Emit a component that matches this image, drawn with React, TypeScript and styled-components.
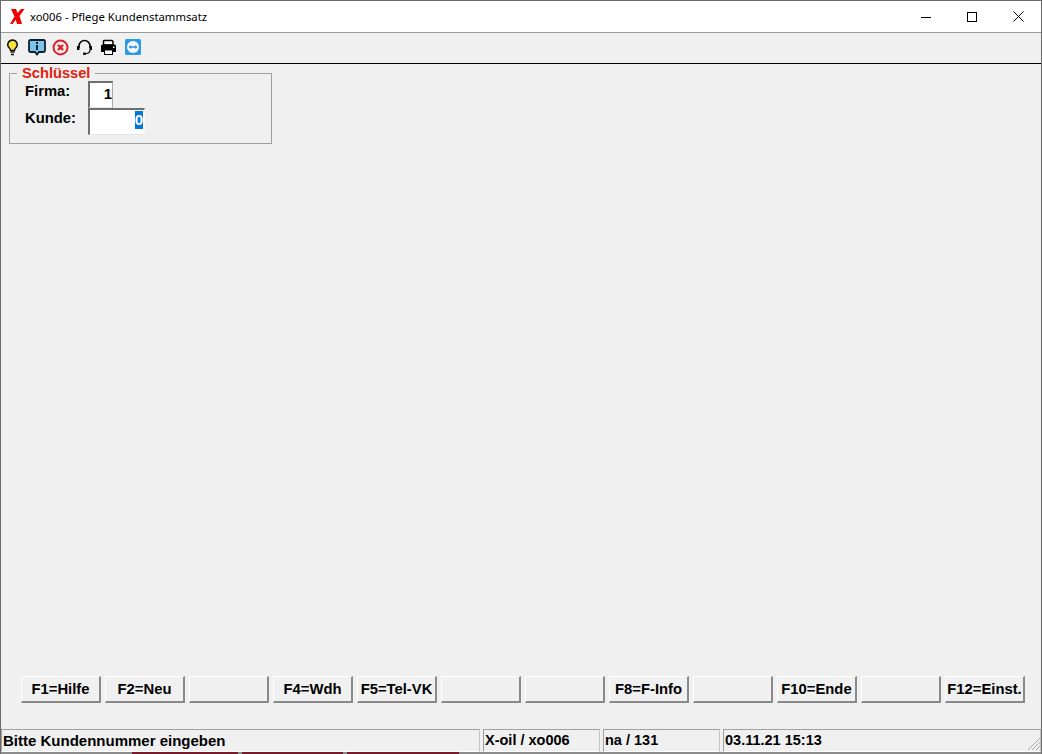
import React from "react";
import styled, { createGlobalStyle } from "styled-components";

const Global = createGlobalStyle`
  html, body { margin: 0; padding: 0; background: #f0f0f0; }
  #root { width: 1042px; height: 754px; overflow: hidden; }
`;

const Win = styled.div`
  width: 1042px;
  height: 754px;
  box-sizing: border-box;
  display: flex;
  flex-direction: column;
  background: #f0f0f0;
  border-top: 1px solid #6b6b6b;
  border-left: 1px solid #6b6b6b;
  border-right: 1px solid #6b6b6b;
  font-family: "Liberation Sans", Arial, sans-serif;
  color: #000;
`;

const TitleBar = styled.div`
  height: 31px;
  flex: none;
  background: #fff;
  border-bottom: 1px solid #9a9a9a;
  display: flex;
  align-items: center;
  padding-left: 9px;
`;

const TitleText = styled.span`
  font-family: "Noto Sans", "Open Sans", sans-serif;
  font-size: 11.3px;
  margin-left: 5px;
  color: #000;
`;

const WinButtons = styled.div`
  margin-left: auto;
  display: flex;
  height: 100%;
`;

const WinButton = styled.div`
  width: 46px;
  height: 31px;
  display: flex;
  align-items: center;
  justify-content: center;
`;

const ToolBar = styled.div`
  height: 28px;
  padding-bottom: 2px;
  flex: none;
  border-bottom: 1px solid #000;
  display: flex;
  align-items: center;
  gap: 3px;
  padding-left: 1px;
  background: #f0f0f0;
`;

const Tool = styled.div`
  width: 21px;
  height: 20px;
  display: flex;
  align-items: center;
  justify-content: center;
`;

const Content = styled.div`
  flex: 1;
  min-height: 0;
  display: flex;
  flex-direction: column;
  padding: 2px 0 0 8px;
`;

const Group = styled.fieldset`
  margin: 0;
  width: 263px;
  height: 78px;
  box-sizing: border-box;
  border: 1px solid #a0a0a0;
  padding: 0 0 0 15px;
`;

const Legend = styled.legend`
  padding: 0 5px;
  margin-left: -8px;
  color: #e1210f;
  font-size: 14.67px;
  font-weight: bold;
  line-height: 15px;
`;

const FieldRow = styled.div`
  display: flex;
  align-items: flex-start;
  height: 27px;
`;

const Label = styled.label`
  width: 63px;
  font-size: 14.8px;
  font-weight: bold;
  line-height: 20px;
  flex: none;
`;

const Input = styled.div<{ $w: number; $pad: number; $edge: string }>`
  width: ${(p) => p.$w}px;
  height: 27px;
  box-sizing: border-box;
  background: #fff;
  border-top: 2px solid #6e6e6e;
  border-left: 2px solid #6e6e6e;
  border-right: 1px solid ${(p) => p.$edge};
  border-bottom: 1px solid #e4e4e4;
  font-size: 15px;
  font-weight: bold;
  line-height: 22px;
  text-align: right;
  padding-right: ${(p) => p.$pad}px;
`;

const Selected = styled.span`
  background: #0078d7;
  color: #fff;
  display: inline-block;
  line-height: 18px;
  margin-top: 1px;
  vertical-align: top;
`;

const Spacer = styled.div`
  flex: 1;
`;

const KeyBar = styled.div`
  display: flex;
  gap: 4px;
  padding-left: 12px;
  margin-bottom: 26px;
  flex: none;
`;

const Key = styled.div`
  width: 80px;
  height: 27px;
  box-sizing: border-box;
  background: #f0f0f0;
  border-top: 1px solid #fff;
  border-left: 1px solid #fff;
  border-right: 2px solid #8a8a8a;
  border-bottom: 2px solid #8a8a8a;
  font-size: 14.8px;
  font-weight: bold;
  line-height: 25px;
  text-align: center;
  white-space: nowrap;
`;

const StatusBar = styled.div`
  height: 23px;
  flex: none;
  display: flex;
  gap: 3px;
  position: relative;
`;

const Cell = styled.div<{ $w?: number; $size: number }>`
  width: ${(p) => (p.$w ? `${p.$w}px` : "auto")};
  flex: ${(p) => (p.$w ? "none" : "1")};
  box-sizing: border-box;
  font-size: ${(p) => p.$size}px;
  font-weight: bold;
  line-height: 21px;
  padding-left: 1px;
  border-top: 1px solid #a0a0a0;
  border-left: 1px solid #a0a0a0;
  border-right: 1px solid #c4c4c4;
  border-bottom: 1px solid #fff;
  white-space: nowrap;
`;

const Grip = styled.svg`
  position: absolute;
  right: 1px;
  bottom: 2px;
`;

const Behind = styled.div`
  height: 2px;
  flex: none;
  display: flex;
  background: #8c8c8c;
`;

const Strip = styled.div<{ $x: number; $w: number }>`
  margin-left: ${(p) => p.$x}px;
  width: ${(p) => p.$w}px;
  background: #7a1a2c;
`;

const keys = ["F1=Hilfe", "F2=Neu", "", "F4=Wdh", "F5=Tel-VK", "", "", "F8=F-Info", "", "F10=Ende", "", "F12=Einst."];

export default function App() {
  return (
    <>
      <Global />
      <Win>
        <TitleBar>
          <svg width="15" height="15" viewBox="0 0 15 15">
            <path d="M1 0h5l1.500 4L11 0h3.500L9.500 7l2.500 8H7L5.800 10.800 2.500 15H0l4.500-7.500z" fill="#f00000" />
          </svg>
          <TitleText>xo006 - Pflege Kundenstammsatz</TitleText>
          <WinButtons>
            <WinButton>
              <svg width="10" height="10" viewBox="0 0 10 10"><path d="M0 5.500h10" stroke="#000" fill="none" /></svg>
            </WinButton>
            <WinButton>
              <svg width="10" height="10" viewBox="0 0 10 10"><rect x=".5" y=".5" width="9" height="9" stroke="#000" fill="none" /></svg>
            </WinButton>
            <WinButton>
              <svg width="11" height="11" viewBox="0 0 11 11"><path d="M.5.500l10 10M10.500.500l-10 10" stroke="#000" fill="none" /></svg>
            </WinButton>
          </WinButtons>
        </TitleBar>
        <ToolBar>
          <Tool>
            <svg width="12" height="17" viewBox="0.500 0 12 17">
              <path d="M6 1a4.700 4.700 0 0 0-3 8.300c.7.6 1 1.500 1 2.200h4c0-.7.3-1.600 1-2.200A4.700 4.700 0 0 0 6 1z" fill="#f6e23c" stroke="#111" strokeWidth="1.500" />
              <path d="M4 13h4M4.500 15.500h3" stroke="#111" strokeWidth="1.400" />
            </svg>
          </Tool>
          <Tool>
            <svg width="18" height="17" viewBox="0 0 18 17">
              <path d="M2.500 1h13A1.500 1.500 0 0 1 17 2.500v9a1.500 1.500 0 0 1-1.500 1.500H11l-2 2.500L7 13H2.500A1.500 1.500 0 0 1 1 11.500v-9A1.500 1.500 0 0 1 2.500 1z" fill="#7cc4ee" stroke="#10202c" strokeWidth="1.800" />
              <rect x="8" y="3" width="2" height="2" fill="#10202c" />
              <rect x="8" y="6" width="2" height="5" fill="#10202c" />
            </svg>
          </Tool>
          <Tool>
            <svg width="17" height="17" viewBox="0 0 17 17">
              <circle cx="8.500" cy="8.500" r="7" fill="#fbeaea" stroke="#d8202c" strokeWidth="1.900" />
              <path d="M6 6l5 5M11 6l-5 5" stroke="#d8202c" strokeWidth="2.400" />
            </svg>
          </Tool>
          <Tool>
            <svg width="17" height="17" viewBox="0 0 17 17">
              <path d="M3 9V7a5.500 5.500 0 0 1 11 0v2" fill="none" stroke="#000" strokeWidth="1.500" />
              <rect x="1" y="7" width="2.500" height="4" fill="#000" />
              <rect x="13.500" y="7" width="2.500" height="4" fill="#000" />
              <path d="M14 11c0 2.500-2 3.500-4 3.500" fill="none" stroke="#000" strokeWidth="1.200" />
              <rect x="7" y="13.500" width="3" height="2.500" rx="1" fill="#000" />
            </svg>
          </Tool>
          <Tool>
            <svg width="17" height="17" viewBox="0 0 17 17">
              <path d="M4 1.500h8l1 1V6H3.500V2z" fill="#fff" stroke="#000" strokeWidth="1.500" />
              <path d="M2.500 5.500h12A1.500 1.500 0 0 1 16 7v6h-3v-2H4v2H1V7a1.500 1.500 0 0 1 1.500-1.500z" fill="#000" />
              <rect x="4.500" y="11" width="8" height="4.500" fill="#fff" stroke="#000" />
              <rect x="13" y="7.500" width="1.500" height="1.500" fill="#fff" />
            </svg>
          </Tool>
          <Tool>
            <svg width="16" height="16" viewBox="0 0 16 16">
              <rect width="16" height="16" rx="1.500" fill="#2d9be4" />
              <circle cx="8" cy="8" r="6" fill="#f2f8fd" />
              <path d="M3.500 8l2.300-2v1.300h4.400V6l2.300 2-2.300 2V8.700H5.800V10z" fill="#2d8fd8" />
            </svg>
          </Tool>
        </ToolBar>
        <Content>
          <Group>
            <Legend>Schlüssel</Legend>
            <FieldRow>
              <Label>Firma:</Label>
              <Input $w={25} $pad={0} $edge="#a8a8a8">1</Input>
            </FieldRow>
            <FieldRow>
              <Label>Kunde:</Label>
              <Input $w={57} $pad={1} $edge="#f8f8f8"><Selected>0</Selected></Input>
            </FieldRow>
          </Group>
          <Spacer />
          <KeyBar>
            {keys.map((k, i) => (
              <Key key={i}>{k}</Key>
            ))}
          </KeyBar>
        </Content>
        <StatusBar>
          <Cell $w={479} $size={15}>Bitte Kundennummer eingeben</Cell>
          <Cell $w={117} $size={14.5}>X-oil / xo006</Cell>
          <Cell $w={117} $size={14.5}>na / 131</Cell>
          <Cell $size={14.5}>03.11.21 15:13</Cell>
          <Grip width="13" height="13" viewBox="0 0 13 13">
            <path d="M13 1L1 13M13 5l-8 8M13 9l-4 4" stroke="#a8a8a8" fill="none" />
          </Grip>
        </StatusBar>
        <Behind>
          <Strip $x={131} $w={106} />
          <Strip $x={4} $w={101} />
          <Strip $x={4} $w={112} />
        </Behind>
      </Win>
    </>
  );
}
